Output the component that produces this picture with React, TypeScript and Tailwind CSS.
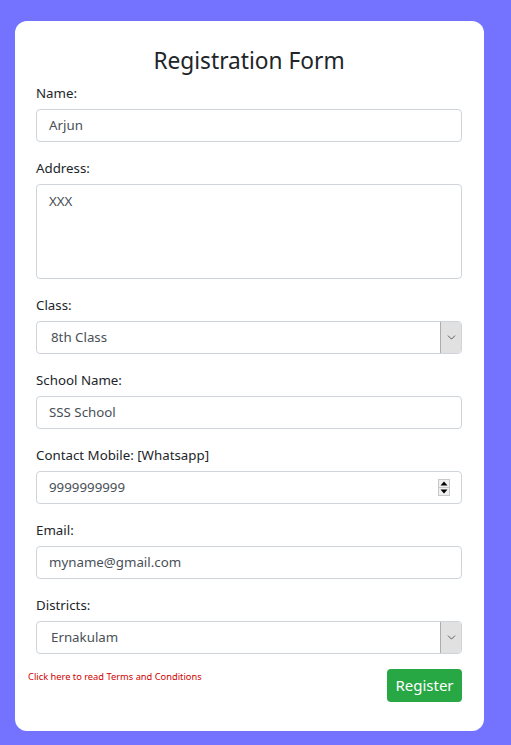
import { ChevronDown } from "lucide-react";

const inputBox =
	"h-[33px] w-full rounded-[4px] border border-[#ced4da] bg-white text-[13.3px] text-[#495057] flex items-center";

function Label({ text }: { text: string }) {
	return <div className="h-[21px] leading-[21px] mb-[5px] text-[13.3px] text-[#212529]">{text}</div>;
}

function TextField({ label, value, spinner }: { label: string; value: string; spinner?: boolean }) {
	return (
		<div className="mb-4">
			<Label text={label} />
			<div className={`${inputBox} pl-3 pr-[11px]`}>
				<span className="flex-1">{value}</span>
				{spinner && (
					<svg width="12" height="17" viewBox="0 0 12 17" className="shrink-0">
						<rect x="0.5" y="0.5" width="11" height="16" fill="#f0f0f0" stroke="#c8c8c8" />
						<line x1="1" y1="8.5" x2="11" y2="8.5" stroke="#c8c8c8" />
						<polygon points="2.5,6.5 9.5,6.5 6,2.5" fill="#000" />
						<polygon points="2.5,10.5 9.5,10.5 6,14.5" fill="#000" />
					</svg>
				)}
			</div>
		</div>
	);
}

function SelectField({ label, value }: { label: string; value: string }) {
	return (
		<div className="mb-4">
			<Label text={label} />
			<div className={`${inputBox} pl-[14px] overflow-hidden`}>
				<span className="flex-1">{value}</span>
				<div className="h-full w-[21px] bg-[#e1e1e1] border-l border-[#adadad] rounded-r-[3px] flex items-center justify-center">
					<ChevronDown size={13} strokeWidth={1.4} className="text-[#333]" />
				</div>
			</div>
		</div>
	);
}

export default function App() {
	return (
		<div
			className="min-h-[745px] bg-[#7373ff] pt-[21px] pl-[15px] pb-[14px]"
			style={{ fontFamily: '"Noto Sans", "Open Sans", sans-serif' }}
		>
			<div className="w-[469px] rounded-[12px] bg-white pl-[21px] pr-[22px] pt-[25px] pb-[29px]">
				<h1 className="text-center text-[22.7px] leading-[30px] text-[#212529] mb-[7px]">Registration Form</h1>

				<TextField label="Name:" value="Arjun" />

				<div className="mb-4">
					<Label text="Address:" />
					<div className="h-[95px] w-full rounded-[4px] border border-[#ced4da] px-3 pt-[7px] text-[13.3px] text-[#495057]">
						XXX
					</div>
				</div>

				<SelectField label="Class:" value="8th Class" />
				<TextField label="School Name:" value="SSS School" />
				<TextField label="Contact Mobile: [Whatsapp]" value="9999999999" spinner />
				<TextField label="Email:" value="myname@gmail.com" />
				<SelectField label="Districts:" value="Ernakulam" />

				<div className="flex items-start justify-between -mt-px">
					<a className="-ml-[8px] mt-[2px] text-[9.3px] leading-[12px] text-[#d00000] cursor-pointer">
						Click here to read Terms and Conditions
					</a>
					<button
						type="button"
						className="h-[33px] w-[75px] rounded-[4px] bg-[#28a745] text-[15px] text-white"
					>
						Register
					</button>
				</div>
			</div>
		</div>
	);
}
